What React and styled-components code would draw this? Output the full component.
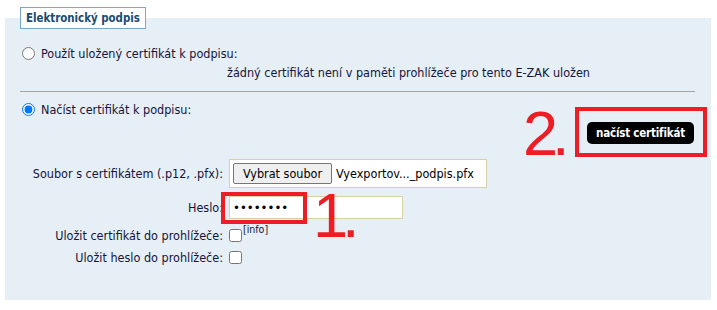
import React from "react";
import styled, { createGlobalStyle } from "styled-components";

const Global = createGlobalStyle`
  html, body { margin: 0; padding: 0; background: #ffffff; }
  body {
    font-family: "DejaVu Sans Condensed", "DejaVu Sans", sans-serif;
    font-size: 12.5px;
    color: #15153a;
  }
`;

const Panel = styled.section`
  position: relative;
  box-sizing: border-box;
  margin: 18px 6px 0 5px;
  height: 282px;
  background: #e6eef6;
  display: flex;
  flex-direction: column;
  align-items: stretch;
`;

const LegendWrap = styled.div`
  margin: -11px 0 0 15px;
  display: flex;
`;

const Legend = styled.div`
  background: #ffffff;
  border: 1px solid #7ba7cf;
  padding: 3px 5px;
  line-height: 14px;
  font-weight: bold;
  font-size: 11.4px;
  color: #1b4a73;
`;

const RadioRow = styled.label`
  display: flex;
  align-items: center;
  gap: 6px;
  height: 16px;
  margin: ${(p) => p.$mt}px 0 0 17px;
`;

const Radio = styled.input`
  margin: 0;
  width: 13px;
  height: 13px;
`;

const InfoLine = styled.div`
  height: 16px;
  line-height: 16px;
  margin-top: 4px;
  padding-left: 222px;
`;

const Divider = styled.hr`
  border: none;
  height: 1px;
  background: #a6a6a6;
  margin: 10px 16px 0 15px;
`;

const ActionBar = styled.div`
  display: flex;
  justify-content: flex-end;
  padding-right: 17px;
  margin-top: 5px;
`;

const BlackButton = styled.button`
  background: #000000;
  color: #ffffff;
  border: none;
  border-radius: 5px;
  width: 107px;
  height: 22px;
  padding: 0;
  font-family: "DejaVu Sans Condensed", "DejaVu Sans", sans-serif;
  font-weight: bold;
  font-size: 11.5px;
  letter-spacing: -0.2px;
`;

const FieldRow = styled.div`
  display: flex;
  align-items: center;
  gap: 6px;
  margin-top: ${(p) => p.$mt}px;
  height: ${(p) => p.$h}px;
`;

const FieldLabel = styled.label`
  width: 218px;
  text-align: right;
  flex: none;
`;

const FileBox = styled.div`
  box-sizing: border-box;
  width: 258px;
  height: 29px;
  background: #ffffff;
  border: 1px solid #d8d0a6;
  display: flex;
  align-items: center;
  gap: 4px;
  padding-left: 3px;
  font-size: 12.5px;
  color: #000000;
`;

const GreyButton = styled.button`
  box-sizing: border-box;
  width: 99px;
  height: 21px;
  background: #efefef;
  border: 1px solid #767676;
  border-radius: 2px;
  padding: 0;
  font-family: "DejaVu Sans Condensed", "DejaVu Sans", sans-serif;
  font-size: 12.5px;
  color: #000000;
`;

const TextInput = styled.input`
  box-sizing: border-box;
  width: 174px;
  height: 23px;
  margin: 0;
  padding: 0 3px;
  background: #ffffff;
  border: 1px solid #d8d0a6;
  font-family: "DejaVu Sans Condensed", "DejaVu Sans", sans-serif;
  font-size: 13px;
  letter-spacing: 0;
  color: #000000;
  outline: none;
`;

const Check = styled.input`
  margin: 0;
  width: 13px;
  height: 13px;
`;

const Sup = styled.sup`
  font-size: 10.5px;
  line-height: 1;
  align-self: flex-start;
  margin-left: -5px;
  vertical-align: baseline;
`;

const RedBox = styled.div`
  position: absolute;
  box-sizing: border-box;
  border: 4px solid #ee1c25;
  left: ${(p) => p.$x}px;
  top: ${(p) => p.$y}px;
  width: ${(p) => p.$w}px;
  height: ${(p) => p.$h}px;
  pointer-events: none;
`;

const StepNumber = styled.div`
  position: absolute;
  left: ${(p) => p.$x}px;
  top: ${(p) => p.$y}px;
  font-family: "Liberation Sans", Arial, sans-serif;
  font-size: 63px;
  line-height: 63px;
  letter-spacing: -6px;
  color: #ee1c25;
  pointer-events: none;
`;

export default function App() {
  return (
    <>
      <Global />
      <Panel>
        <LegendWrap>
          <Legend>Elektronický podpis</Legend>
        </LegendWrap>

        <RadioRow $mt={16}>
          <Radio type="radio" name="cert" />
          <span>Použít uložený certifikát k podpisu:</span>
        </RadioRow>
        <InfoLine>žádný certifikát není v paměti prohlížeče pro tento E-ZAK uložen</InfoLine>

        <Divider />

        <RadioRow $mt={9}>
          <Radio type="radio" name="cert" defaultChecked />
          <span>Načíst certifikát k podpisu:</span>
        </RadioRow>

        <ActionBar>
          <BlackButton type="button">načíst certifikát</BlackButton>
        </ActionBar>

        <FieldRow $mt={15} $h={29}>
          <FieldLabel>Soubor s certifikátem (.p12, .pfx):</FieldLabel>
          <FileBox>
            <GreyButton type="button">Vybrat soubor</GreyButton>
            <span>Vyexportov..._podpis.pfx</span>
          </FileBox>
        </FieldRow>

        <FieldRow $mt={8} $h={23}>
          <FieldLabel>Heslo:</FieldLabel>
          <TextInput type="password" defaultValue="abcdefgh" readOnly />
        </FieldRow>

        <FieldRow $mt={5} $h={22}>
          <FieldLabel>Uložit certifikát do prohlížeče:</FieldLabel>
          <Check type="checkbox" />
          <Sup>[info]</Sup>
        </FieldRow>

        <FieldRow $mt={0} $h={22}>
          <FieldLabel>Uložit heslo do prohlížeče:</FieldLabel>
          <Check type="checkbox" />
        </FieldRow>

        <RedBox $x={570} $y={89} $w={132} $h={50} />
        <StepNumber $x={518} $y={84}>2.</StepNumber>
        <RedBox $x={216} $y={174} $w={86} $h={32} />
        <StepNumber $x={308} $y={166}>1.</StepNumber>
      </Panel>
    </>
  );
}
